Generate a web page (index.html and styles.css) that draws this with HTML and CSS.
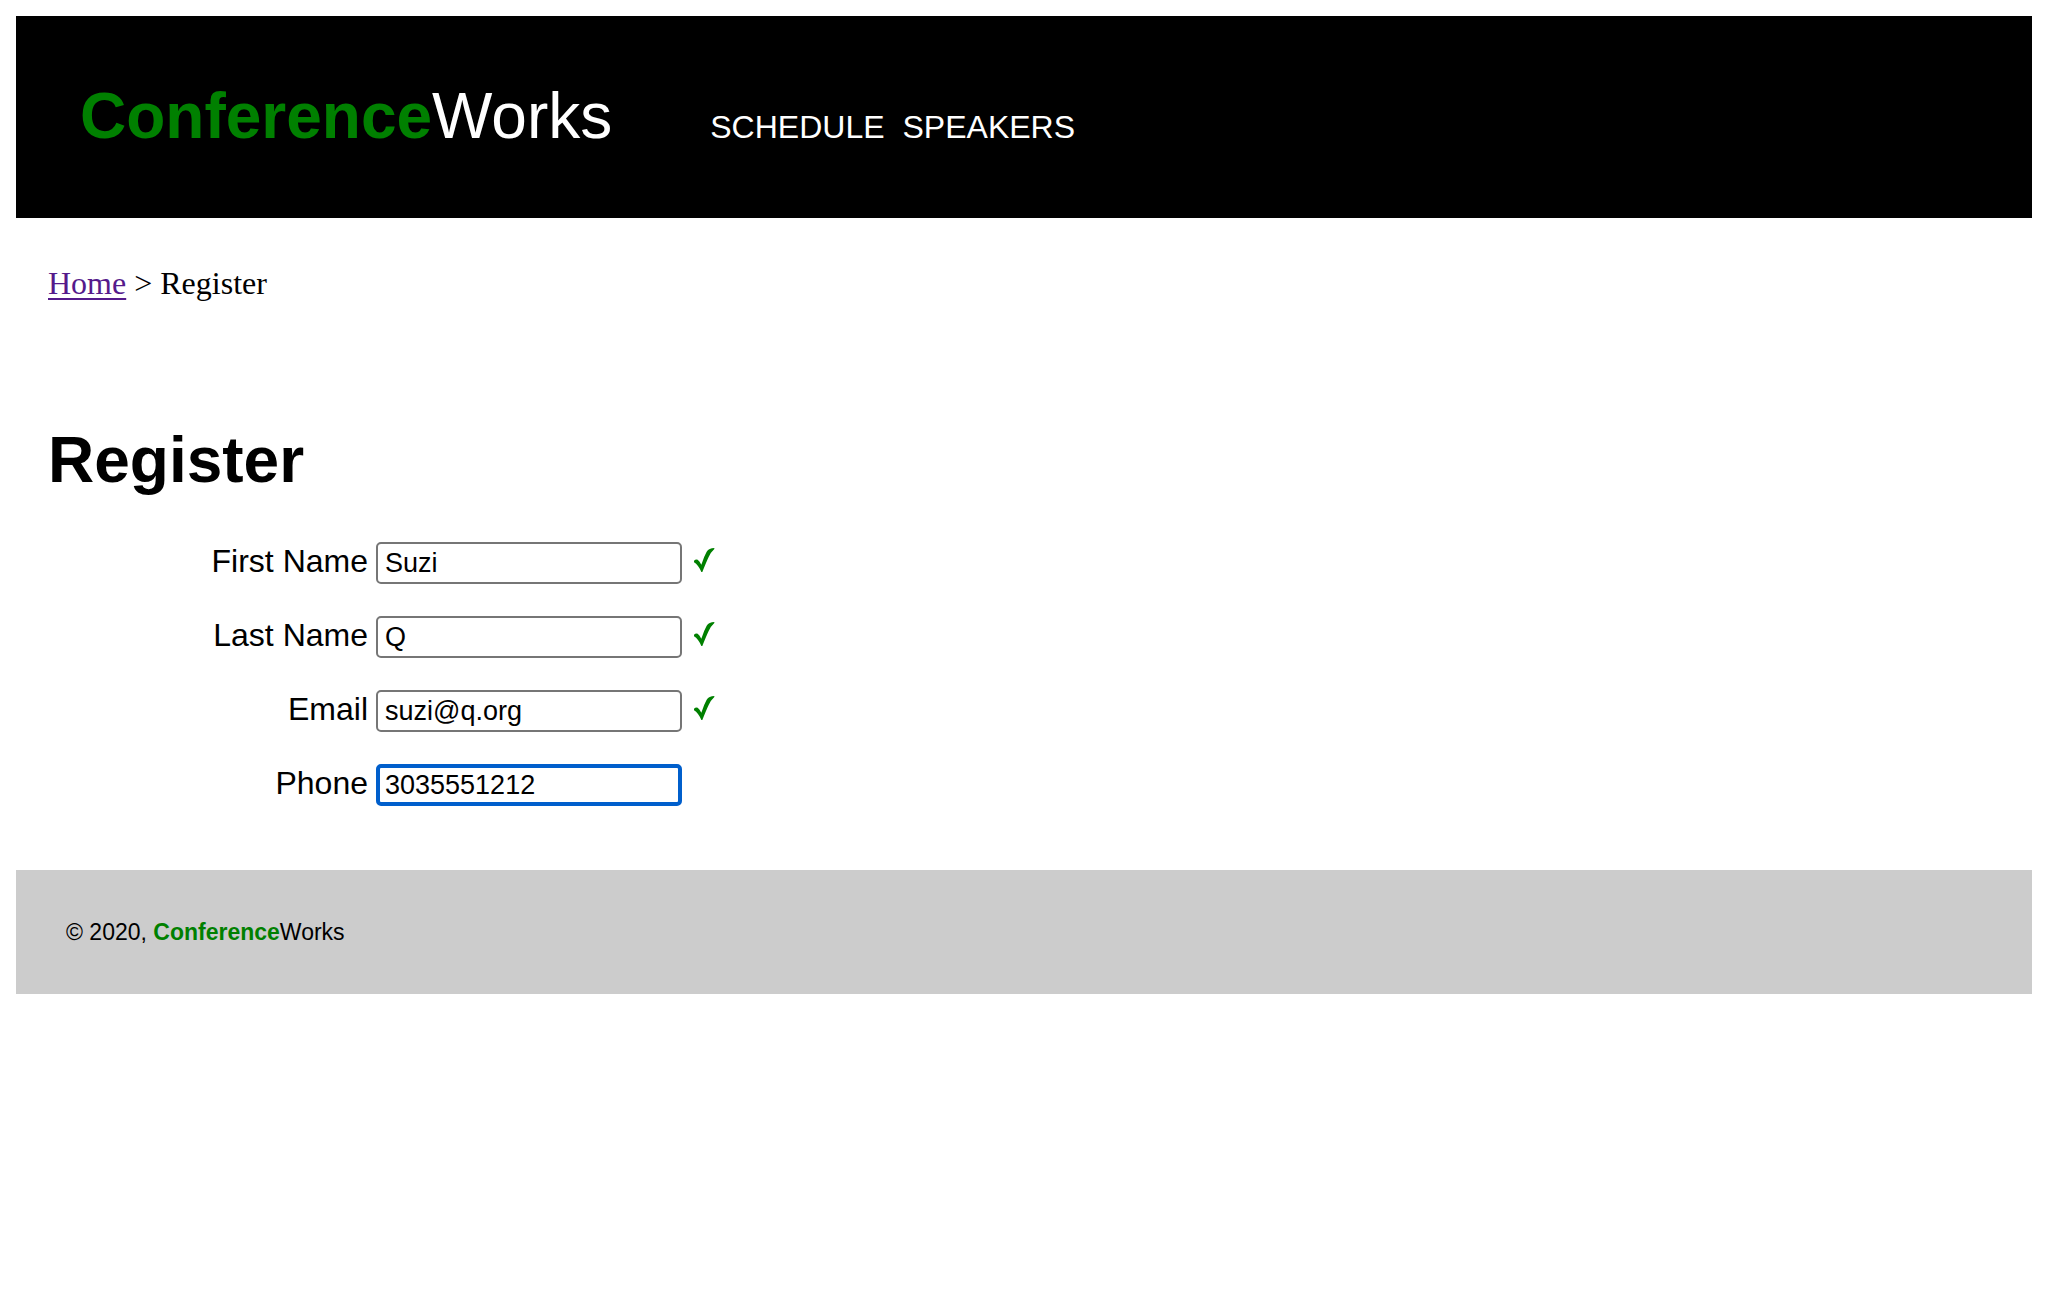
FILE: index.html
```html
<!DOCTYPE html>
<html lang="en">
<head>
<meta charset="utf-8">
<title>Register - ConferenceWorks</title>
<link rel="stylesheet" href="styles.css">
</head>
<body>
<header class="header">
  <div class="logo"><b class="brand">Conference</b>Works</div>
  <nav class="nav"><a href="#schedule">SCHEDULE</a><a href="#speakers">SPEAKERS</a></nav>
</header>
<nav class="crumbs"><a href="#home">Home</a> &gt; Register</nav>
<main class="main">
  <h1 class="title">Register</h1>
  <form class="form">
    <div class="row"><label class="label" for="first">First Name</label><input class="field" id="first" type="text" value="Suzi"><svg class="tick" viewBox="0 0 60 72" aria-hidden="true"><path d="M0 38 Q5 33 11 35 Q17 39 22 50 Q30 25 38 11 Q45 0 61 0 L61 3 Q51 12 44 27 Q36 44 25 72 L22 72 Q13 51 0 43 Z"/></svg></div>
    <div class="row"><label class="label" for="last">Last Name</label><input class="field" id="last" type="text" value="Q"><svg class="tick" viewBox="0 0 60 72" aria-hidden="true"><path d="M0 38 Q5 33 11 35 Q17 39 22 50 Q30 25 38 11 Q45 0 61 0 L61 3 Q51 12 44 27 Q36 44 25 72 L22 72 Q13 51 0 43 Z"/></svg></div>
    <div class="row"><label class="label" for="email">Email</label><input class="field" id="email" type="email" value="suzi@q.org"><svg class="tick" viewBox="0 0 60 72" aria-hidden="true"><path d="M0 38 Q5 33 11 35 Q17 39 22 50 Q30 25 38 11 Q45 0 61 0 L61 3 Q51 12 44 27 Q36 44 25 72 L22 72 Q13 51 0 43 Z"/></svg></div>
    <div class="row"><label class="label" for="phone">Phone</label><input class="field field-active" id="phone" type="tel" value="3035551212"></div>
  </form>
</main>
<footer class="footer">© 2020, <b class="brand">Conference</b>Works</footer>
</body>
</html>
```
FILE: styles.css
```css
* { box-sizing: border-box; }
body { margin: 16px; font: 32px/36px "Liberation Sans", Arial, sans-serif; color: #000; background: #fff; }
.brand { color: #008000; }
.header { display: flex; align-items: baseline; gap: 98px; padding: 64px; background: #000; color: #fff; }
.logo { margin-bottom: 2px; font-size: 64px; line-height: 72px; }
.nav { display: flex; gap: 18px; }
.nav a { color: #fff; text-decoration: none; }
.crumbs { padding: 48px 32px; font-family: "Liberation Serif", "Times New Roman", serif; line-height: 34px; }
.crumbs a { color: #551a8b; text-decoration-thickness: 2px; text-underline-offset: 4px; }
.main { padding: 76px 32px 64px; }
.title { margin: 0 0 46px; font-size: 64px; line-height: 72px; }
.form { display: flex; flex-direction: column; gap: 32px; }
.row { display: flex; align-items: flex-start; }
.label { width: 320px; margin-right: 8px; line-height: 38px; text-align: right; }
.field { width: 306px; height: 42px; padding: 2px 7px; border: 2px solid #767676; border-radius: 5px; background: #fff; color: #000; font: 27px/32px "Liberation Sans", Arial, sans-serif; }
.field-active { border: 4px solid #005fcc; padding: 0 5px; outline: none; }
.tick { width: 20px; height: 24px; margin: 6px 0 0 12px; fill: #008000; overflow: visible; }
.footer { padding: 48px 50px; background: #ccc; font-size: 23px; line-height: 28px; }
```
